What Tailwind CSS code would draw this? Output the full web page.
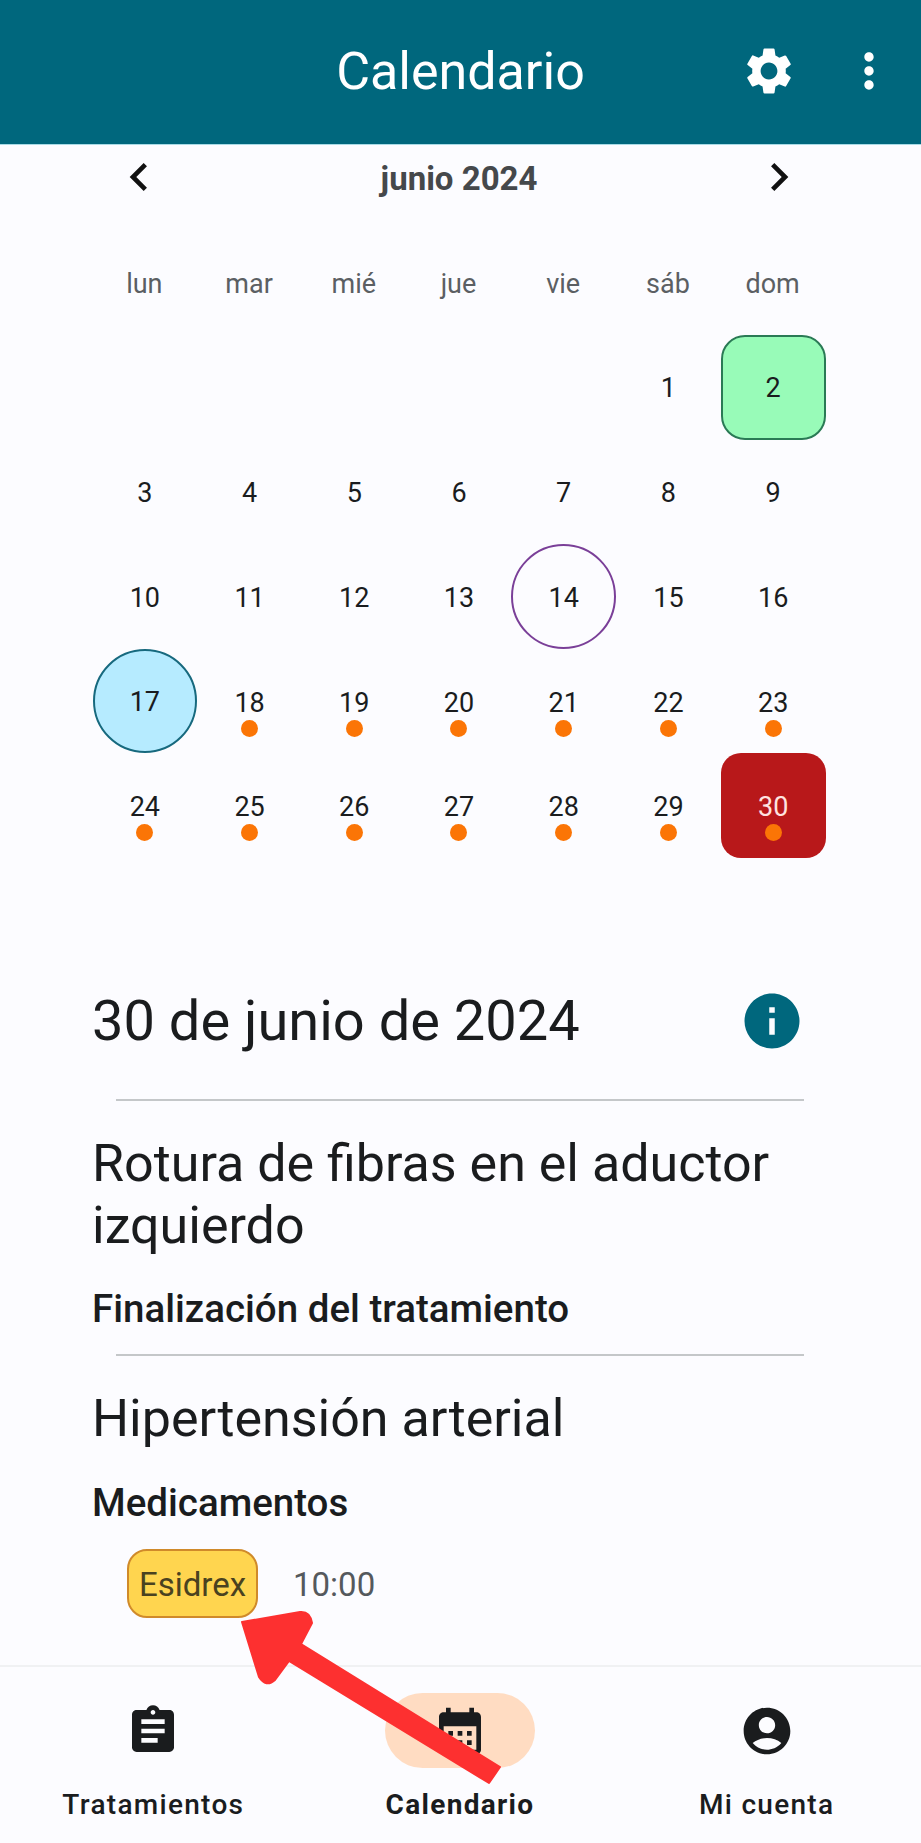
<!DOCTYPE html>
<html lang="es">
<head>
<meta charset="utf-8">
<script src="https://cdn.jsdelivr.net/npm/@tailwindcss/browser@4"></script>
</head>
<body class="m-0">
<div class="relative flex h-[1843px] w-[921px] flex-col overflow-hidden bg-[#fcfcff] font-['Roboto',sans-serif] text-[#1a1c1e]">
  <header class="grid h-[145px] shrink-0 grid-cols-[1fr_auto_1fr] items-center border-b border-[#a9dbe6] bg-[#00677d] text-white">
    <div></div>
    <h1 class="text-[52px] leading-[56px] font-normal">Calendario</h1>
    <div class="mb-[3px] flex justify-end gap-[44px] pr-6">
      <svg class="h-14 w-14 fill-white" viewBox="0 0 24 24"><path d="M19.14 12.94c.04-.3.06-.61.06-.94 0-.32-.02-.64-.07-.94l2.03-1.58c.18-.14.23-.41.12-.61l-1.92-3.32c-.12-.22-.37-.29-.59-.22l-2.39.96c-.5-.38-1.03-.7-1.62-.94l-.36-2.54c-.04-.24-.24-.41-.48-.41h-3.84c-.24 0-.43.17-.47.41l-.36 2.54c-.59.24-1.13.57-1.62.94l-2.39-.96c-.22-.08-.47 0-.59.22L2.74 8.87c-.12.21-.08.47.12.61l2.03 1.58c-.05.3-.09.63-.09.94s.02.64.07.94l-2.03 1.58c-.18.14-.23.41-.12.61l1.92 3.32c.12.22.37.29.59.22l2.39-.96c.5.38 1.03.7 1.62.94l.36 2.54c.05.24.24.41.48.41h3.84c.24 0 .44-.17.47-.41l.36-2.54c.59-.24 1.13-.56 1.62-.94l2.39.96c.22.08.47 0 .59-.22l1.92-3.32c.12-.22.07-.47-.12-.61l-2.01-1.58zM12 15.6c-1.98 0-3.6-1.62-3.6-3.6s1.62-3.6 3.6-3.6 3.6 1.62 3.6 3.6-1.62 3.6-3.6 3.6z"/></svg>
      <svg class="h-14 w-14 fill-white" viewBox="0 0 24 24"><path d="M12 8c1.1 0 2-.9 2-2s-.9-2-2-2-2 .9-2 2 .9 2 2 2zm0 2c-1.1 0-2 .9-2 2s.9 2 2 2 2-.9 2-2-.9-2-2-2zm0 6c-1.1 0-2 .9-2 2s.9 2 2 2 2-.9 2-2-.9-2-2-2z"/></svg>
    </div>
  </header>

  <main class="flex-1">
    <div class="mt-1 ml-[111px] flex h-14 w-[696px] items-center justify-between">
      <svg class="h-14 w-14 fill-[#111]" viewBox="0 0 24 24"><path d="M15.41 7.41L14 6l-6 6 6 6 1.41-1.41L10.83 12z"/></svg>
      <span class="pt-[3px] text-[33px] font-bold text-[#45484b]">junio 2024</span>
      <svg class="h-14 w-14 fill-[#111]" viewBox="0 0 24 24"><path d="M10 6L8.59 7.41 13.17 12l-4.58 4.59L10 18l6-6z"/></svg>
    </div>

    <div class="mt-[59px] ml-[92px] grid h-10 w-[733px] grid-cols-7 items-center text-center text-[27px] text-[#5b5f63]">
      <span>lun</span><span>mar</span><span>mié</span><span>jue</span><span>vie</span><span>sáb</span><span>dom</span>
    </div>

    <div class="mt-[31px] ml-[92.5px] grid w-[733px] grid-cols-7 grid-rows-[repeat(5,104.6px)] text-[27px]">
      <div class="col-start-6 flex items-center justify-center pt-[2px]">1</div>
      <div class="flex items-center justify-center rounded-[24px] border-[2.5px] border-[#2a7a55] bg-[#98fbb8] pt-[2px]">2</div>

      <div class="flex items-center justify-center pt-[2px]">3</div>
      <div class="flex items-center justify-center pt-[2px]">4</div>
      <div class="flex items-center justify-center pt-[2px]">5</div>
      <div class="flex items-center justify-center pt-[2px]">6</div>
      <div class="flex items-center justify-center pt-[2px]">7</div>
      <div class="flex items-center justify-center pt-[2px]">8</div>
      <div class="flex items-center justify-center pt-[2px]">9</div>

      <div class="flex items-center justify-center pt-[3px]">10</div>
      <div class="flex items-center justify-center pt-[3px]">11</div>
      <div class="flex items-center justify-center pt-[3px]">12</div>
      <div class="flex items-center justify-center pt-[3px]">13</div>
      <div class="flex items-center justify-center rounded-full border-[2.5px] border-[#7a3f98] pt-[3px]">14</div>
      <div class="flex items-center justify-center pt-[3px]">15</div>
      <div class="flex items-center justify-center pt-[3px]">16</div>

      <div class="flex items-center justify-center rounded-full border-[2.5px] border-[#17697e] bg-[#b6ebff] pt-[2px]">17</div>
      <div class="flex flex-col items-center pt-[38px] leading-[32px]">18<i class="mt-[1px] h-[17px] w-[17px] rounded-full bg-[#fb7506]"></i></div>
      <div class="flex flex-col items-center pt-[38px] leading-[32px]">19<i class="mt-[1px] h-[17px] w-[17px] rounded-full bg-[#fb7506]"></i></div>
      <div class="flex flex-col items-center pt-[38px] leading-[32px]">20<i class="mt-[1px] h-[17px] w-[17px] rounded-full bg-[#fb7506]"></i></div>
      <div class="flex flex-col items-center pt-[38px] leading-[32px]">21<i class="mt-[1px] h-[17px] w-[17px] rounded-full bg-[#fb7506]"></i></div>
      <div class="flex flex-col items-center pt-[38px] leading-[32px]">22<i class="mt-[1px] h-[17px] w-[17px] rounded-full bg-[#fb7506]"></i></div>
      <div class="flex flex-col items-center pt-[38px] leading-[32px]">23<i class="mt-[1px] h-[17px] w-[17px] rounded-full bg-[#fb7506]"></i></div>

      <div class="flex flex-col items-center pt-[38px] leading-[32px]">24<i class="mt-[1px] h-[17px] w-[17px] rounded-full bg-[#fb7506]"></i></div>
      <div class="flex flex-col items-center pt-[38px] leading-[32px]">25<i class="mt-[1px] h-[17px] w-[17px] rounded-full bg-[#fb7506]"></i></div>
      <div class="flex flex-col items-center pt-[38px] leading-[32px]">26<i class="mt-[1px] h-[17px] w-[17px] rounded-full bg-[#fb7506]"></i></div>
      <div class="flex flex-col items-center pt-[38px] leading-[32px]">27<i class="mt-[1px] h-[17px] w-[17px] rounded-full bg-[#fb7506]"></i></div>
      <div class="flex flex-col items-center pt-[38px] leading-[32px]">28<i class="mt-[1px] h-[17px] w-[17px] rounded-full bg-[#fb7506]"></i></div>
      <div class="flex flex-col items-center pt-[38px] leading-[32px]">29<i class="mt-[1px] h-[17px] w-[17px] rounded-full bg-[#fb7506]"></i></div>
      <div class="flex flex-col items-center rounded-[20px] bg-[#b8181a] pt-[38px] leading-[32px] text-[#ffe3e0]">30<i class="mt-[1px] h-[17px] w-[17px] rounded-full bg-[#fb7506]"></i></div>
    </div>

    <section class="mt-[130px] ml-[92px] w-[712px]">
      <div class="flex h-[66px] items-center justify-between">
        <h2 class="text-[56px] leading-[66px] font-normal">30 de junio de 2024</h2>
        <svg class="mr-[-1px] h-[66px] w-[66px] fill-[#00677d]" viewBox="0 0 24 24"><path d="M12 2C6.48 2 2 6.48 2 12s4.48 10 10 10 10-4.48 10-10S17.52 2 12 2zm1 15h-2v-6h2v6zm0-8h-2V7h2v2z"/></svg>
      </div>
      <hr class="mt-[45px] ml-[24px] border-t-2 border-[#c4c7c9]">
      <h3 class="mt-[32px] text-[52px] leading-[62px] font-normal">Rotura de fibras en el aductor izquierdo</h3>
      <p class="mt-[32px] text-[38.5px] leading-[40px] font-medium">Finalización del tratamiento</p>
      <hr class="mt-[25px] ml-[24px] border-t-2 border-[#c4c7c9]">
      <h3 class="mt-[32px] text-[52px] leading-[62px] font-normal">Hipertensión arterial</h3>
      <p class="mt-[33px] text-[38.5px] leading-[40px] font-medium">Medicamentos</p>
      <div class="mt-[26px] ml-[35px] flex items-center gap-[35px]">
        <span class="flex h-[69px] w-[131px] items-center justify-center rounded-[20px] border-[2.5px] border-[#d08a2a] bg-[#ffd54f] pt-[2px] text-[33px] text-[#4a4220]">Esidrex</span>
        <span class="pt-[2px] text-[33px] text-[#55595d]">10:00</span>
      </div>
    </section>
  </main>

  <nav class="grid h-[178px] shrink-0 grid-cols-3 border-t-2 border-[#f0f1f3] pr-[1px] text-[28px] tracking-[1.3px]">
    <a class="flex flex-col items-center">
      <span class="mt-[26px] flex h-[75px] w-[150px] items-center justify-center">
        <svg class="h-14 w-14 fill-[#1a1c1e]" viewBox="0 0 24 24"><path d="M19 3h-4.18C14.4 1.84 13.3 1 12 1c-1.3 0-2.4.84-2.82 2H5c-1.1 0-2 .9-2 2v14c0 1.1.9 2 2 2h14c1.1 0 2-.9 2-2V5c0-1.1-.9-2-2-2zm-7 0c.55 0 1 .45 1 1s-.45 1-1 1-1-.45-1-1 .45-1 1-1zm2 14H7v-2h7v2zm3-4H7v-2h10v2zm0-4H7V7h10v2z"/></svg>
      </span>
      <span class="mt-[16px] font-medium">Tratamientos</span>
    </a>
    <a class="flex flex-col items-center">
      <span class="mt-[26px] flex h-[75px] w-[150px] items-center justify-center rounded-full bg-[#ffdcc2]">
        <svg class="h-14 w-14 fill-[#1a1c1e]" viewBox="0 0 24 24"><path d="M19 4h-1V2h-2v2H8V2H6v2H5c-1.1 0-2 .9-2 2v14c0 1.1.9 2 2 2h14c1.1 0 2-.9 2-2V6c0-1.1-.9-2-2-2zm0 16H5V10h14v10zM9 14H7v-2h2v2zm4 0h-2v-2h2v2zm4 0h-2v-2h2v2zm-8 4H7v-2h2v2zm4 0h-2v-2h2v2zm4 0h-2v-2h2v2z"/></svg>
      </span>
      <span class="mt-[16px] font-bold">Calendario</span>
    </a>
    <a class="flex flex-col items-center">
      <span class="mt-[26px] flex h-[75px] w-[150px] items-center justify-center">
        <svg class="h-14 w-14 fill-[#1a1c1e]" viewBox="0 0 24 24"><path d="M12 2C6.48 2 2 6.48 2 12s4.48 10 10 10 10-4.48 10-10S17.52 2 12 2zm0 4c1.93 0 3.5 1.57 3.5 3.5S13.93 13 12 13s-3.5-1.57-3.5-3.5S10.07 6 12 6zm0 14c-2.03 0-4.43-.82-6.14-2.88C7.55 15.8 9.68 15 12 15s4.45.8 6.14 2.12C16.43 19.18 14.03 20 12 20z"/></svg>
      </span>
      <span class="mt-[16px] font-medium">Mi cuenta</span>
    </a>
  </nav>

  <svg class="absolute top-0 left-0 h-[1843px] w-[921px]" viewBox="0 0 921 1843">
    <path d="M242 1622 L300 1612 Q310 1611 312 1623 L301 1644 L500 1767 L489 1783 L289 1661 L275 1680 Q266 1688 259 1677 Z" fill="#fd3030" stroke="#fd3030" stroke-width="2" stroke-linejoin="round"/>
  </svg>
</div>
</body>
</html>
